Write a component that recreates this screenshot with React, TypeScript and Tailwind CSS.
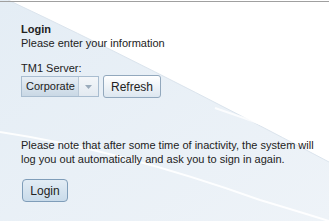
export default function App() {
  return (
    <div className="relative w-[329px] h-[221px] overflow-hidden bg-white pt-px font-['Liberation_Sans',Arial,sans-serif] text-[11px] text-[#222]">
      <svg className="absolute inset-0" width="329" height="221" viewBox="0 0 329 221">
        <defs>
          <linearGradient id="bg" x1="0" y1="0" x2="1" y2="1">
            <stop offset="0" stopColor="#e4edf5" />
            <stop offset="1" stopColor="#eef3f8" />
          </linearGradient>
        </defs>
        <path d="M8 0 Q 140 62 329 162 L329 221 L0 221 L0 0 Z" fill="url(#bg)" />
        <path d="M8 0 Q 140 62 329 162" fill="none" stroke="#dbe4ed" strokeWidth="1" />
        <path d="M0 132 Q 120 150 260 200 Q 300 212 329 221" fill="none" stroke="#ffffff" strokeWidth="2" opacity="0.9" />
        <path d="M215 108 Q 275 128 329 152" fill="none" stroke="#ffffff" strokeWidth="2" opacity="0.8" />
      </svg>
      <div className="relative border-t border-[#a0a0a0] pl-[21px] pt-[20px]">
        <div className="font-bold leading-[14px]">Login</div>
        <div className="leading-[14px]">Please enter your information</div>
        <div className="mt-[11px] leading-[14px]">TM1 Server:</div>
        <div className="flex items-center gap-[4px]">
          <div className="flex h-[21px] w-[78px] border border-[#a9bdd0]">
            <div className="flex w-[57px] items-center border-r border-[#b9c9d8] bg-gradient-to-b from-[#e7eef5] to-[#c9d8e5] pl-[4px] text-[11px]">
              Corporate
            </div>
            <div className="flex flex-1 items-center justify-center bg-gradient-to-b from-[#f3f6f9] to-[#e3eaf1]">
              <svg width="7" height="4" viewBox="0 0 7 4">
                <path d="M0 0 L7 0 L3.5 4 Z" fill="#9aabbb" />
              </svg>
            </div>
          </div>
          <button className="h-[23px] w-[58px] rounded-[3px] border border-[#92a8bd] bg-gradient-to-b from-[#ffffff] to-[#dde7f0] text-[12px] text-[#222]">
            Refresh
          </button>
        </div>
        <p className="mt-[40px] leading-[14px]">
          Please note that after some time of inactivity, the system will
          <br />
          log you out automatically and ask you to sign in again.
        </p>
        <button className="mt-[13px] ml-px h-[23px] w-[46px] rounded-[4px] border border-[#7f9db9] bg-gradient-to-b from-[#e2ecf5] to-[#c9dbea] text-[12px] text-[#222]">
          Login
        </button>
      </div>
    </div>
  );
}
